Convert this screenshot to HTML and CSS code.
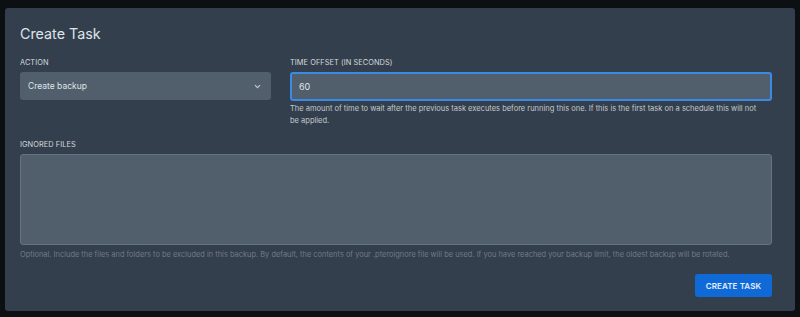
FILE: index.html
```html
<!DOCTYPE html>
<html lang="en">
  <head>
    <meta charset="UTF-8" />
    <meta name="viewport" content="width=device-width, initial-scale=1.0" />
    <title>Create Task</title>
    <link rel="stylesheet" href="styles.css">
  </head>
  <body>
    <div class="modal">
      <h2 class="title">Create Task</h2>

      <div class="row">
        <div class="field action">
          <label class="label">Action</label>
          <div class="select">
            <span>Create backup</span>
            <svg width="7" height="5" viewBox="0 0 7 5">
              <path d="M1 1.2l2.5 2.5 2.5-2.5" fill="none" stroke="#c3cad2" stroke-width="1.1" />
            </svg>
          </div>
        </div>

        <div class="field offset">
          <label class="label">Time offset (in seconds)</label>
          <div class="input">60</div>
          <p class="help">
            The amount of time to wait after the previous task executes before running this one. If this is the first task on a schedule this will not be applied.
          </p>
        </div>
      </div>

      <div class="field ignored">
        <label class="label">Ignored files</label>
        <div class="textarea"></div>
        <p class="help dim">
          Optional. Include the files and folders to be excluded in this backup. By default, the contents of your .pteroignore file will be used. If you have reached your backup limit, the oldest backup will be rotated.
        </p>
      </div>

      <div class="actions">
        <button class="Button">Create Task</button>
      </div>
    </div>
  </body>
</html>
```

FILE: styles.css
```css
* {
  margin: 0;
  padding: 0;
  box-sizing: border-box;
  font-family: "Inter", "Noto Sans", sans-serif;
}
body {
  background: #0d1013;
  padding: 8px 5px 6px 5px;
  height: 317px;
}

.modal {
  background: #333f4c;
  border-radius: 3px;
  height: 303px;
  padding: 16px 23px 0 15px;
  color: #cbd2d9;
}

.title {
  font-size: 14.3px;
  font-weight: 400;
  color: #dfe4ea;
  line-height: 20px;
  margin-bottom: 14px;
}

.row {
  display: flex;
  gap: 19px;
}

.action {
  width: 251px;
}
.offset {
  flex: 1;
}

.label {
  display: block;
  font-size: 7.4px;
  text-transform: uppercase;
  letter-spacing: 0.05px;
  color: #d3d9df;
  line-height: 10px;
  margin-bottom: 4px;
}

.select {
  height: 28px;
  background: #515f6c;
  border-radius: 3px;
  display: flex;
  align-items: center;
  justify-content: space-between;
  padding: 0 10px 0 8px;
  font-size: 8.5px;
  color: #dfe4ea;
}

.input {
  height: 29px;
  background: #515f6c;
  border: 2px solid #3b8ae6;
  border-radius: 3px;
  display: flex;
  align-items: center;
  padding-left: 7px;
  font-size: 9px;
  color: #dfe4ea;
}

.help {
  font-size: 7.5px;
  line-height: 12px;
  color: #c3cad2;
  margin-top: 2px;
  padding-right: 12px;
}
.help.dim {
  font-size: 7.45px;
  color: #6f7b88;
  margin-top: 4px;
  padding-right: 0;
}

.ignored {
  margin-top: 13px;
}
.textarea {
  height: 91px;
  background: #515f6c;
  border: 1px solid #66727f;
  border-radius: 3px;
}

.actions {
  display: flex;
  justify-content: flex-end;
  margin-top: 13px;
}

.Button {
  width: 77px;
  height: 23px;
  background: #0f6ad8;
  color: #e6eefa;
  border: none;
  border-radius: 3px;
  font-size: 8px;
  font-weight: 600;
  text-transform: uppercase;
  letter-spacing: 0.1px;
  cursor: pointer;
}
```
